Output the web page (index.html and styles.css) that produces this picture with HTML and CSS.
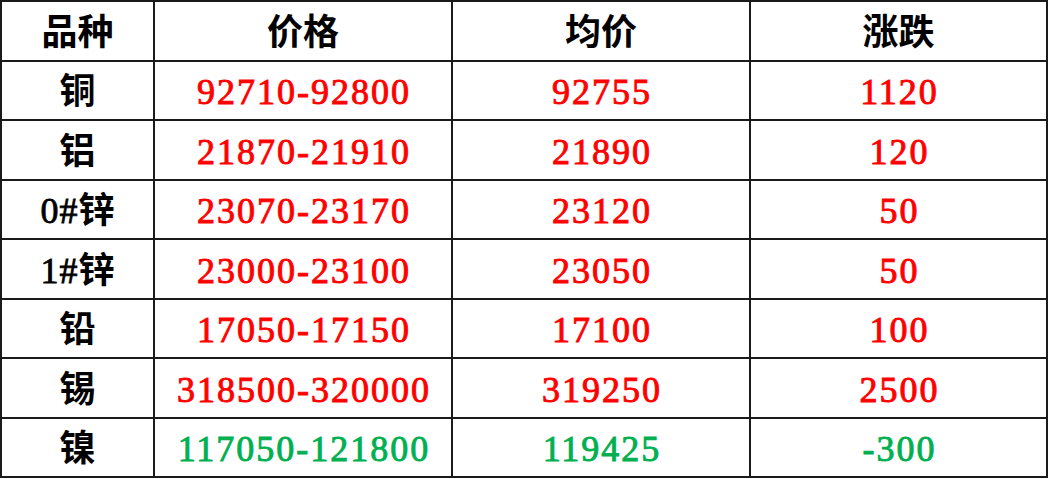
FILE: index.html
```html
<!DOCTYPE html>
<html lang="zh-CN">
<head>
<meta charset="utf-8">
<title>价格表</title>
<link rel="stylesheet" href="styles.css">
</head>
<body>
<div class="sheet">
  <div class="cell head">品种</div>
  <div class="cell head">价格</div>
  <div class="cell head">均价</div>
  <div class="cell head">涨跌</div>

  <div class="cell name">铜</div>
  <div class="cell num up">92710-92800</div>
  <div class="cell num up">92755</div>
  <div class="cell num up">1120</div>

  <div class="cell name">铝</div>
  <div class="cell num up">21870-21910</div>
  <div class="cell num up">21890</div>
  <div class="cell num up">120</div>

  <div class="cell name"><span class="lat">0#</span>锌</div>
  <div class="cell num up">23070-23170</div>
  <div class="cell num up">23120</div>
  <div class="cell num up">50</div>

  <div class="cell name"><span class="lat">1#</span>锌</div>
  <div class="cell num up">23000-23100</div>
  <div class="cell num up">23050</div>
  <div class="cell num up">50</div>

  <div class="cell name">铅</div>
  <div class="cell num up">17050-17150</div>
  <div class="cell num up">17100</div>
  <div class="cell num up">100</div>

  <div class="cell name">锡</div>
  <div class="cell num up">318500-320000</div>
  <div class="cell num up">319250</div>
  <div class="cell num up">2500</div>

  <div class="cell name">镍</div>
  <div class="cell num down">117050-121800</div>
  <div class="cell num down">119425</div>
  <div class="cell num down">-300</div>
</div>
</body>
</html>
```
FILE: styles.css
```css
html, body {
  margin: 0;
  padding: 0;
  background: #ffffff;
}

.sheet {
  display: grid;
  grid-template-columns: 151px 296px 296px 295px;
  grid-template-rows: repeat(8, 57.5px);
  gap: 2px;
  padding: 2px;
  width: max-content;
  background: #1a1a1a;
}

.cell {
  background: #ffffff;
  display: flex;
  align-items: center;
  justify-content: center;
  padding-top: 4px;
  box-sizing: border-box;
  font-family: "Liberation Serif", "Noto Sans CJK SC", serif;
  font-size: 36px;
  font-weight: 700;
  line-height: 1;
  color: #000000;
}

.lat {
  font-weight: 400;
  letter-spacing: 1px;
  -webkit-text-stroke: 0.8px currentColor;
}

.num {
  font-weight: 400;
  letter-spacing: 2px;
  padding-left: 2px;
  -webkit-text-stroke: 0.9px currentColor;
}

.up {
  color: #ff0000;
}

.down {
  color: #00b050;
}
```
